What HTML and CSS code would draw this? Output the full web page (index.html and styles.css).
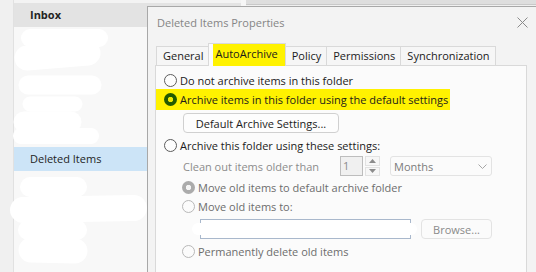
FILE: index.html
```html
<!DOCTYPE html>
<html lang="en">
<head>
    <meta charset="UTF-8">
    <meta name="viewport" content="width=device-width, initial-scale=1.0">
    <title>Deleted Items Properties</title>
    <link rel="stylesheet" href="styles.css">
</head>
<body>
    <div class="app">
        <div class="rail"></div>
        <div class="folders">
            <div class="folder current">Inbox</div>
            <div class="folder">Sent Items</div>
            <div class="folder">Drafts</div>
            <div class="folder"></div>
            <div class="folder"></div>
            <div class="folder">Junk Email</div>
            <div class="folder selected">Deleted Items</div>
            <div class="folder">Archive</div>
            <div class="folder">Conversation History</div>
            <div class="folder"></div>
            <div class="folder">Outbox</div>
        </div>
        <div class="splitter"></div>
        <div class="reading">
            <div class="reading-bar"></div>
        </div>

        <!-- white scribbles hiding the other folder names -->
        <svg class="scribble" width="150" height="272" viewBox="0 0 150 272">
            <g stroke="#fff" stroke-linecap="round" fill="none">
                <line x1="30" y1="38" x2="99" y2="38" stroke-width="18"/>
                <line x1="27" y1="58" x2="88" y2="53" stroke-width="25"/>
                <line x1="28" y1="85" x2="92" y2="85" stroke-width="19"/>
                <line x1="30" y1="104" x2="75" y2="104" stroke-width="15"/>
                <line x1="24" y1="122" x2="71" y2="122" stroke-width="21"/>
                <line x1="21" y1="136" x2="91" y2="136" stroke-width="16"/>
                <line x1="30" y1="187" x2="77" y2="187" stroke-width="20"/>
                <line x1="23" y1="210" x2="134" y2="208" stroke-width="26"/>
                <line x1="28" y1="230" x2="77" y2="230" stroke-width="20"/>
                <line x1="31" y1="250" x2="75" y2="251" stroke-width="25"/>
            </g>
        </svg>
    </div>

    <div class="dialog">
        <div class="titlebar">
            <span class="title">Deleted Items Properties</span>
            <span class="close">
                <svg width="11" height="11" viewBox="0 0 11 11">
                    <path d="M0.5 0.5 L10.5 10.5 M10.5 0.5 L0.5 10.5" stroke="#8a8a8a" stroke-width="1" fill="none"/>
                </svg>
            </span>
        </div>

        <div class="tabs">
            <div class="tab">General</div>
            <div class="tab active"><span class="mark">AutoArchive</span></div>
            <div class="tab">Policy</div>
            <div class="tab">Permissions</div>
            <div class="tab">Synchronization</div>
        </div>

        <div class="panel">
            <div class="option first"><span class="radio"></span>Do not archive items in this folder</div>
            <div class="option marked"><span class="radio on"></span>Archive items in this folder using the default settings</div>
            <button class="btn settings">Default Archive Settings...</button>
            <div class="option third"><span class="radio"></span>Archive this folder using these settings:</div>

            <div class="clean-row">
                <span class="clean-label">Clean out items older than</span>
                <span class="spin-box">1</span>
                <span class="spin-arrows">
                    <span class="spin-btn">
                        <svg width="7" height="4" viewBox="0 0 7 4"><path d="M0 4 L3.5 0 L7 4 Z" fill="#8c8c8c"/></svg>
                    </span>
                    <span class="spin-btn">
                        <svg width="7" height="4" viewBox="0 0 7 4"><path d="M0 0 L3.5 4 L7 0 Z" fill="#8c8c8c"/></svg>
                    </span>
                </span>
                <span class="select">
                    Months
                    <svg class="chevron" width="9" height="5" viewBox="0 0 9 5"><path d="M0.5 0.5 L4.5 4.5 L8.5 0.5" stroke="#a6a6a6" stroke-width="1" fill="none"/></svg>
                </span>
            </div>

            <div class="option sub disabled move-default"><span class="radio on"></span>Move old items to default archive folder</div>
            <div class="option sub disabled"><span class="radio"></span>Move old items to:</div>
            <div class="path-row">
                <span class="path-input"></span>
                <span class="btn browse">Browse...</span>
                <span class="blot"></span>
            </div>
            <div class="option sub disabled last"><span class="radio"></span>Permanently delete old items</div>
        </div>
    </div>
</body>
</html>
```

FILE: styles.css
```css
body {
    margin: 0;
    width: 536px;
    height: 272px;
    overflow: hidden;
    position: relative;
    background-color: #f3f3f3;
    font-family: 'Open Sans', 'Noto Sans', sans-serif;
    font-size: 11px;
    color: #1b1b1b;
}

/* mail window behind the dialog */
.app {
    display: flex;
    height: 272px;
    position: relative;
}

.rail {
    width: 13px;
    background-color: #f0f0f0;
    border-right: 1px solid #e1e1e1;
}

.folders {
    width: 227px;
    margin-top: 3px;
    background-color: #f8f8f8;
}

.folder {
    height: 24px;
    line-height: 24px;
    padding-left: 16px;
    white-space: nowrap;
    overflow: hidden;
    color: #242424;
}

.folder.current {
    background-color: #e3e3e3;
    font-weight: bold;
}

.folder.selected {
    background-color: #cce4f7;
}

.splitter {
    width: 5px;
    background-color: #f7f7f7;
}

.reading {
    flex: 1;
    background-color: #f0f0f0;
}

.reading-bar {
    height: 4px;
    background-color: #dedede;
    border-bottom: 1px solid #c9c9c9;
}

.scribble {
    position: absolute;
    left: 0;
    top: 0;
}

/* dialog */
.dialog {
    position: absolute;
    left: 147px;
    top: 6px;
    width: 388px;
    height: 266px;
    overflow: hidden;
    background-color: #f3f3f3;
    border: 1px solid #a8a8a8;
    border-right: none;
    border-bottom: none;
}

.titlebar {
    height: 30px;
    display: flex;
    align-items: center;
    padding-left: 9px;
}

.title {
    color: #858585;
}

.close {
    margin-left: auto;
    width: 28px;
    height: 28px;
    display: flex;
    align-items: center;
    justify-content: center;
}

.tabs {
    display: flex;
    align-items: flex-end;
    height: 22px;
    margin-top: 6px;
    padding-left: 9px;
}

.tab {
    height: 19px;
    line-height: 18px;
    box-sizing: border-box;
    padding: 0 5px 0 6px;
    margin-left: -1px;
    border: 1px solid #d9d9d9;
    border-bottom: none;
    background-color: #f6f6f6;
    white-space: nowrap;
}

.tab.active {
    height: 23px;
    margin-bottom: -1px;
    padding: 0 0 0 4px;
    background-color: #fbfbfb;
    position: relative;
    z-index: 1;
}

.mark {
    display: block;
    height: 100%;
    padding: 0 7px 0 2px;
    line-height: 20px;
    background-color: #fff200;
}

.panel {
    width: 372px;
    height: 210px;
    box-sizing: border-box;
    margin-left: 7px;
    padding: 6px 0 0 8px;
    border: 1px solid #d9d9d9;
    border-bottom: none;
    background-color: #fbfbfb;
    display: flex;
    flex-direction: column;
    align-items: flex-start;
}

.option {
    display: flex;
    align-items: center;
    gap: 3px;
    height: 19px;
    white-space: nowrap;
}

.option.first {
    height: 17px;
}

.option.marked {
    height: 21px;
    margin-left: -8px;
    padding: 0 2px 0 8px;
    background-color: #fff200;
}

.option.third {
    height: 18px;
    margin-top: 3px;
}

.option.sub {
    margin-left: 18px;
}

.option.move-default {
    margin-top: 2px;
}

.option.last {
    margin-top: 3px;
}

.disabled {
    color: #6d6d6d;
}

.radio {
    width: 13px;
    height: 13px;
    box-sizing: border-box;
    flex: none;
    border-radius: 50%;
    border: 1px solid #5c5c5c;
    background-color: #fdfdfd;
}

.radio.on {
    border: none;
    background: radial-gradient(circle, #eeea00 0 2.4px, #225a00 3px);
}

.disabled .radio {
    border-color: #b8b8b8;
    background-color: #fbfbfb;
}

.disabled .radio.on {
    border: none;
    background: radial-gradient(circle, #f4f4f4 0 2.4px, #ababab 3px);
}

.btn {
    height: 20px;
    box-sizing: border-box;
    border: 1px solid #d0d0d0;
    border-radius: 4px;
    background-color: #fdfdfd;
    font-family: inherit;
    font-size: 11px;
    color: #1b1b1b;
    padding: 0;
    display: flex;
    align-items: center;
    justify-content: center;
}

.btn.settings {
    width: 156px;
    margin: 3px 0 0 19px;
}

.clean-row {
    display: flex;
    align-items: center;
    height: 20px;
    margin: 2px 0 0 19px;
}

.clean-label {
    width: 157px;
    color: #8c8c8c;
    white-space: nowrap;
}

.spin-box {
    width: 23px;
    height: 20px;
    box-sizing: border-box;
    border: 1px solid #bdbdbd;
    background-color: #f0f0f0;
    color: #8a8a8a;
    padding-left: 2px;
    line-height: 18px;
}

.spin-arrows {
    width: 15px;
    height: 20px;
    margin-left: 2px;
    display: flex;
    flex-direction: column;
    gap: 1px;
}

.spin-btn {
    flex: 1;
    border: 1px solid #e2e2e2;
    background-color: #f7f7f7;
    display: flex;
    align-items: center;
    justify-content: center;
}

.select {
    width: 102px;
    height: 20px;
    box-sizing: border-box;
    margin-left: 10px;
    padding-left: 3px;
    border: 1px solid #e3e3e3;
    border-radius: 3px;
    background-color: #fbfbfb;
    color: #7c7c7c;
    display: flex;
    align-items: center;
}

.chevron {
    margin-left: auto;
    margin-right: 4px;
}

.path-row {
    display: flex;
    height: 20px;
    margin: 3px 0 0 36px;
    position: relative;
}

.path-input {
    width: 211px;
    height: 20px;
    box-sizing: border-box;
    border: 1px solid #a9b8cc;
    background-color: #fff;
}

.btn.browse {
    width: 71px;
    margin-left: 10px;
    border-color: #e3e3e3;
    background-color: #fbfbfb;
    color: #8a8a8a;
}

.blot {
    position: absolute;
    left: -8px;
    top: 4px;
    width: 225px;
    height: 12px;
    border-radius: 6px;
    background-color: #fff;
}
```
